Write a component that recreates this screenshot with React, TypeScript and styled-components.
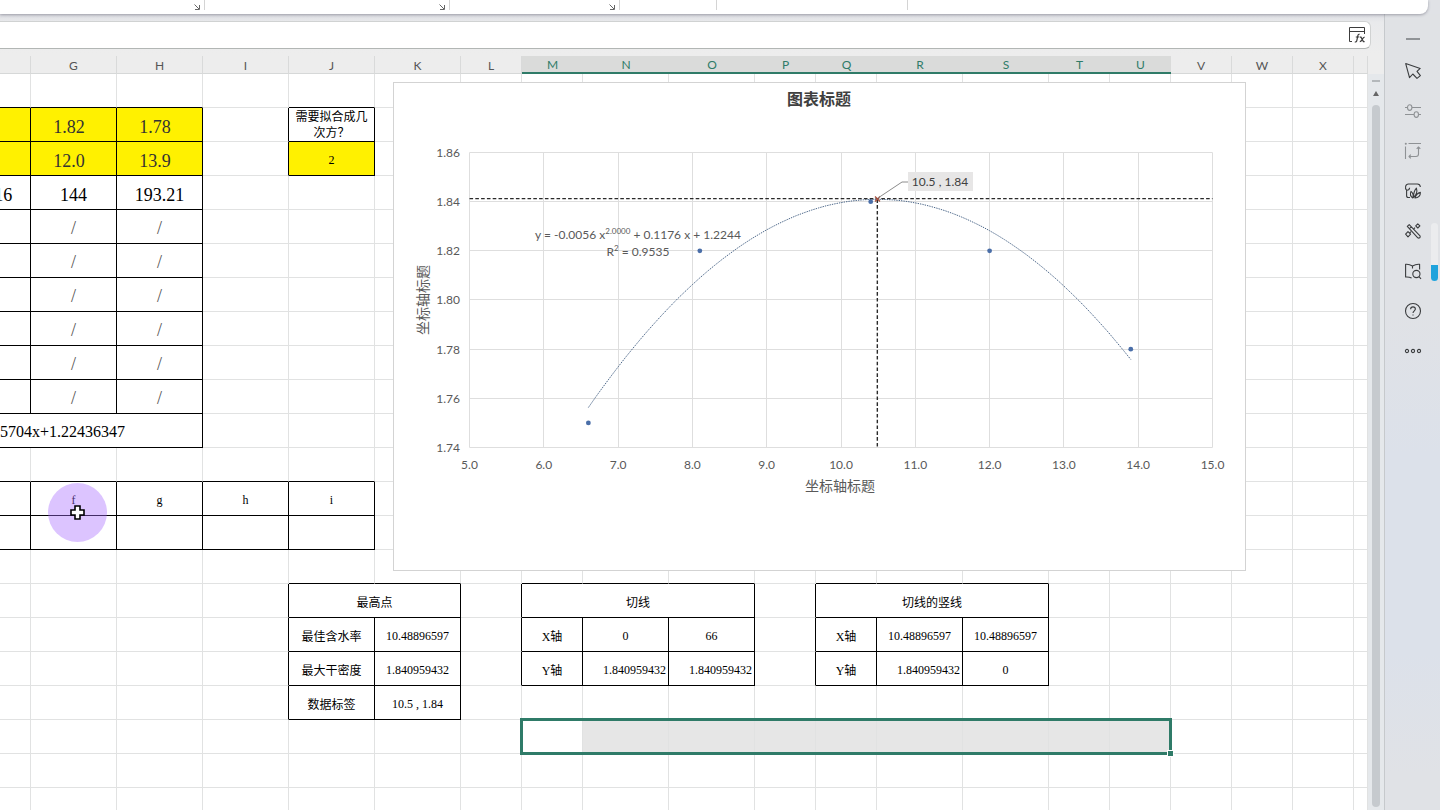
import React from "react";
import styled, { createGlobalStyle } from "styled-components";

const GlobalStyle = createGlobalStyle`
  *, *::before, *::after { box-sizing: border-box; }
  body { margin: 0; background: #e0e2e6; overflow: hidden; }
`;

const ui = `Lato, "Noto Sans CJK SC", sans-serif`;
const song = `"Liberation Serif", "Noto Sans CJK SC", serif`;
const green = "#2f7b68";

const Page = styled.div`
  display: flex;
  flex-direction: column;
  height: 100vh;
  font-family: ${ui};
`;

const Ribbon = styled.header`
  position: relative;
  z-index: 2;
  display: flex;
  flex: none;
  height: 14px;
  margin-right: 12px;
  background: #fff;
  border-bottom-right-radius: 8px;
  box-shadow: 0 1px 3px rgba(60, 60, 80, 0.4);
`;

const RibbonGroup = styled.div<{ $width: number }>`
  display: flex;
  justify-content: flex-end;
  width: ${(p) => p.$width}px;
  height: 10px;
  padding-right: 2px;
  border-right: 1px solid #d4d4d4;
`;

const Launcher = styled.button`
  display: flex;
  align-items: flex-end;
  width: 8px;
  height: 10px;
  padding: 0;
  border: 0;
  background: none;
  color: #666;
`;

const Body = styled.div`
  display: flex;
  flex: 1;
  min-height: 0;
`;

const Workbook = styled.main`
  display: flex;
  flex-direction: column;
  flex: 1;
  min-width: 0;
  background: linear-gradient(#dcdde2, #e9eaec 8px, #ededed 40px);
`;

const FormulaBar = styled.div`
  display: flex;
  flex: none;
  align-items: center;
  height: 28px;
  margin: 7px 13px 7px 0;
  padding-right: 5px;
  background: #fff;
  border: 1px solid #d0d2d2;
  border-bottom-color: #b2b6b4;
  border-left: 0;
  border-radius: 0 6px 6px 0;
`;

const FormulaInput = styled.input`
  flex: 1;
  height: 24px;
  border: 0;
  outline: 0;
  background: transparent;
  font: 13px ${ui};
`;

const IconButton = styled.button`
  display: flex;
  align-items: center;
  justify-content: center;
  padding: 0;
  border: 0;
  background: none;
  color: #3c3c3c;
`;

const SheetRow = styled.div`
  display: flex;
  flex: 1;
  min-height: 0;
`;

const Sheet = styled.section`
  position: relative;
  flex: 1;
  min-width: 0;
  overflow: hidden;
`;

const Grid = styled.table`
  width: calc(100% + 55px);
  margin-left: -55px;
  table-layout: fixed;
  border-collapse: separate;
  border-spacing: 0;
  background: #fff;
`;

const HeadCell = styled.th<{ $active?: boolean }>`
  height: 18px;
  padding: 1px 0 0;
  font: 400 12px/15px ${ui};
  color: ${(p) => (p.$active ? green : "#555")};
  background: ${(p) => (p.$active ? "#dadbda" : "#ededed")};
  border-right: ${(p) => (p.$active ? "0" : "1px solid #d9dada")};
  border-bottom: ${(p) => (p.$active ? `2px solid ${green}` : "1px solid #d6d8d8")};
`;

type Align = "center" | "left" | "right";
const line = (dark: boolean) => `1px solid ${dark ? "#000" : "#e1e2e2"}`;

const Cell = styled.td<{
  $right: boolean;
  $bottom: boolean;
  $fill?: string;
  $size?: number;
  $align?: Align;
  $pad?: string;
  $color?: string;
}>`
  height: 34px;
  padding: ${(p) => p.$pad ?? "0"};
  overflow: hidden;
  white-space: pre-line;
  vertical-align: middle;
  text-align: ${(p) => p.$align ?? "center"};
  font: ${(p) => p.$size ?? 12}px/16px ${song};
  color: ${(p) => p.$color ?? "#000"};
  background: ${(p) => p.$fill ?? "#fff"};
  border-right: ${(p) => line(p.$right)};
  border-bottom: ${(p) => line(p.$bottom)};
`;

const Selection = styled.div`
  position: absolute;
  left: 520px;
  top: 662px;
  width: 652px;
  height: 37px;
  border: 3px solid ${green};
`;

const FillHandle = styled.div`
  position: absolute;
  right: -5px;
  bottom: -5px;
  width: 7px;
  height: 7px;
  background: ${green};
  border: 1px solid #fff;
`;

const ChartFrame = styled.figure`
  position: absolute;
  left: 393px;
  top: 26px;
  margin: 0;
  background: #fff;
  border: 1px solid #d3d3d3;
  svg { display: block; }
  text { font-family: ${ui}; font-size: 12px; fill: #595959; }
  .heading { font-size: 16px; font-weight: 700; fill: #404040; }
  .axis { font-size: 14px; }
  .label { fill: #404040; }
  .power { font-size: 8px; }
`;

const Pointer = styled.div`
  position: absolute;
  left: 48px;
  top: 427px;
  display: flex;
  align-items: center;
  justify-content: center;
  width: 59px;
  height: 59px;
  border-radius: 50%;
  background: rgba(167, 107, 255, 0.4);
`;

const ScrollTrack = styled.div`
  display: flex;
  flex-direction: column;
  align-items: center;
  flex: none;
  width: 16px;
  margin-top: 18px;
  padding: 6px 0 3px;
  background: #e5e8eb;
`;

const SplitHandle = styled.div`
  width: 8px;
  height: 2px;
  background: #b4b8bb;
`;

const ScrollArrow = styled.button`
  display: flex;
  align-items: center;
  justify-content: center;
  width: 16px;
  height: 23px;
  padding: 0;
  border: 0;
  background: none;
  color: #666;
`;

const ScrollThumb = styled.div`
  flex: 1;
  width: 8px;
  border-radius: 4px;
  background: #c6cace;
`;

const Sidebar = styled.aside`
  position: relative;
  display: flex;
  flex: none;
  flex-direction: column;
  align-items: center;
  width: 56px;
  padding-top: 24px;
  border-left: 1px solid #c6c9cc;
  background: linear-gradient(#e0e2e5 0, #e0e2e6 300px, #dce1ea 440px, #dce1ea 640px, #e0e2e6 760px);
`;

const CollapseBar = styled.div`
  width: 14px;
  height: 2px;
  margin-bottom: 11px;
  background: #909396;
`;

const Tool = styled(IconButton)<{ $dim?: boolean }>`
  width: 40px;
  height: 40px;
  color: ${(p) => (p.$dim ? "#8f9295" : "#3a3c3e")};
`;

const SideGauge = styled.div`
  position: absolute;
  right: 2px;
  top: 209px;
  display: flex;
  align-items: flex-end;
  width: 7px;
  height: 58px;
  border-radius: 4px;
  background: #ebecee;
  overflow: hidden;
`;

const GaugeLevel = styled.div`
  width: 7px;
  height: 16px;
  background: #1fa3dc;
`;

/* ---- sheet data ---- */

const columns = [
  { name: "F", width: 86 },
  { name: "G", width: 86 },
  { name: "H", width: 86 },
  { name: "I", width: 86 },
  { name: "J", width: 86 },
  { name: "K", width: 86 },
  { name: "L", width: 61 },
  { name: "M", width: 61 },
  { name: "N", width: 86 },
  { name: "O", width: 86 },
  { name: "P", width: 61 },
  { name: "Q", width: 61 },
  { name: "R", width: 86 },
  { name: "S", width: 86 },
  { name: "T", width: 61 },
  { name: "U", width: 61 },
  { name: "V", width: 61 },
  { name: "W", width: 61 },
  { name: "X", width: 61 },
  { name: "", width: 0 },
];
const ROWS = 22;
const col = (name: string) => columns.findIndex((c) => c.name === name);

// Bordered ranges: first row, last row, first column, last column.
const boxes: [number, number, string, string][] = [
  [1, 10, "F", "H"],
  [1, 2, "J", "J"],
  [12, 13, "F", "J"],
  [15, 18, "J", "K"],
  [15, 17, "M", "O"],
  [15, 17, "Q", "S"],
];
const boxed = (r: number, c: number) =>
  boxes.some(([r0, r1, a, b]) => r >= r0 && r <= r1 && c >= col(a) && c <= col(b));

type Spec = {
  text?: string;
  span?: number;
  fill?: string;
  size?: number;
  align?: Align;
  pad?: string;
  color?: string;
};
const yellow = "#fff100";
const cells: Record<string, Spec> = {
  F1: { fill: yellow },
  G1: { text: "1.82", fill: yellow, size: 18, pad: "4px 9px 0 0", color: "#333" },
  H1: { text: "1.78", fill: yellow, size: 18, pad: "4px 9px 0 0", color: "#333" },
  J1: { text: "需要拟合成几\n次方？", pad: "1px 0 0" },
  F2: { fill: yellow },
  G2: { text: "12.0", fill: yellow, size: 18, pad: "4px 9px 0 0", color: "#333" },
  H2: { text: "13.9", fill: yellow, size: 18, pad: "4px 9px 0 0", color: "#333" },
  J2: { text: "2", fill: yellow, pad: "2px 0 0" },
  F3: { text: "108.16", size: 18, pad: "4px 0 0" },
  G3: { text: "144", size: 18, pad: "4px 0 0" },
  H3: { text: "193.21", size: 18, pad: "4px 0 0" },
  F10: { text: "5704x+1.22436347", span: 3, size: 16, align: "left", pad: "3px 0 0 55px" },
  G12: { text: "f", pad: "3px 0 0" },
  H12: { text: "g", pad: "3px 0 0" },
  I12: { text: "h", pad: "3px 0 0" },
  J12: { text: "i", pad: "3px 0 0" },
  J15: { text: "最高点", span: 2, pad: "4px 0 0" },
  J16: { text: "最佳含水率", pad: "4px 0 0" },
  K16: { text: "10.48896597", pad: "3px 0 0" },
  J17: { text: "最大干密度", pad: "4px 0 0" },
  K17: { text: "1.840959432", pad: "3px 0 0" },
  J18: { text: "数据标签", pad: "4px 0 0" },
  K18: { text: "10.5 , 1.84", pad: "3px 0 0" },
  M15: { text: "切线", span: 3, pad: "4px 0 0" },
  M16: { text: "X轴", pad: "4px 0 0" },
  N16: { text: "0", pad: "3px 0 0" },
  O16: { text: "66", pad: "3px 0 0" },
  M17: { text: "Y轴", pad: "4px 0 0" },
  N17: { text: "1.840959432", align: "right", pad: "3px 2px 0 0" },
  O17: { text: "1.840959432", align: "right", pad: "3px 2px 0 0" },
  Q15: { text: "切线的竖线", span: 3, pad: "4px 0 0" },
  Q16: { text: "X轴", pad: "4px 0 0" },
  R16: { text: "10.48896597", pad: "3px 0 0" },
  S16: { text: "10.48896597", pad: "3px 0 0" },
  Q17: { text: "Y轴", pad: "4px 0 0" },
  R17: { text: "1.840959432", align: "right", pad: "3px 2px 0 0" },
  S17: { text: "0", pad: "3px 0 0" },
};
for (let r = 4; r <= 9; r++) {
  for (const c of ["G", "H"]) cells[c + r] = { text: "/", size: 18, pad: "2px 0 0", color: "#555" };
}
for (const c of "NOPQRSTU") cells[c + 19] = { fill: "#e6e6e6" };

function SheetRows() {
  return (
    <>
      {Array.from({ length: ROWS }, (_, r) => {
        const out: React.ReactNode[] = [];
        for (let c = 0; c < columns.length; c++) {
          const spec = cells[columns[c].name + r] ?? {};
          const last = c + (spec.span ?? 1) - 1;
          out.push(
            <Cell
              key={c}
              colSpan={spec.span}
              $right={boxed(r, last) || boxed(r, last + 1)}
              $bottom={boxed(r, c) || boxed(r + 1, c)}
              $fill={spec.fill}
              $size={spec.size}
              $align={spec.align}
              $pad={spec.pad}
              $color={spec.color}
            >
              {spec.text}
            </Cell>
          );
          c = last;
        }
        return <tr key={r}>{out}</tr>;
      })}
    </>
  );
}

/* ---- chart ---- */

const plot = { left: 75.5, right: 818.5, top: 69.5, bottom: 364.5 };
const px = (x: number) => plot.left + ((x - 5) / 10) * (plot.right - plot.left);
const py = (y: number) => plot.bottom - ((y - 1.74) / 0.12) * (plot.bottom - plot.top);
const peak = { x: 10.48896597, y: 1.840959432 };
const points = [[6.6, 1.75], [8.1, 1.82], [10.4, 1.84], [12, 1.82], [13.9, 1.78]];
const trend = Array.from({ length: 74 }, (_, i) => {
  const x = 6.6 + i * 0.1;
  return `${px(x).toFixed(1)},${py(peak.y - 0.0056 * (x - peak.x) ** 2).toFixed(1)}`;
}).join(" ");

function Chart() {
  const xs = Array.from({ length: 11 }, (_, i) => 5 + i);
  const ys = Array.from({ length: 7 }, (_, i) => 1.74 + i * 0.02);
  return (
    <ChartFrame>
      <svg width="851" height="487" role="img" aria-label="图表标题">
        <g stroke="#dedede">
          {xs.map((x) => (
            <line key={x} x1={Math.floor(px(x)) + 0.5} x2={Math.floor(px(x)) + 0.5} y1={plot.top} y2={plot.bottom} />
          ))}
          {ys.map((y) => (
            <line key={y} x1={plot.left} x2={plot.right} y1={Math.floor(py(y)) + 0.5} y2={Math.floor(py(y)) + 0.5} />
          ))}
        </g>
        <text className="heading" x="425" y="22" textAnchor="middle">图表标题</text>
        {ys.map((y) => (
          <text key={y} x="66" y={Math.floor(py(y)) + 5} textAnchor="end">{y.toFixed(2)}</text>
        ))}
        {xs.map((x) => (
          <text key={x} x={px(x)} y="386" textAnchor="middle">{x.toFixed(1)}</text>
        ))}
        <text className="axis" x="446" y="408" textAnchor="middle">坐标轴标题</text>
        <text className="axis" transform="translate(34 217) rotate(-90)" textAnchor="middle">坐标轴标题</text>
        <polyline points={trend} fill="none" stroke="#4d688a" strokeDasharray="1.4 1" />
        {points.map(([x, y]) => (
          <circle key={x} cx={px(x)} cy={py(y)} r="2.4" fill="#4a6ea8" />
        ))}
        <g stroke="#2a2a2a" strokeWidth="1.4" strokeDasharray="3.6 2.2">
          <line x1={plot.left} x2={plot.right} y1="115.6" y2="115.6" />
          <line x1={px(peak.x)} x2={px(peak.x)} y1={py(peak.y)} y2={plot.bottom} />
        </g>
        <path d="M481 113.5l5 5M486 113.5l-5 5" stroke="#a8503e" strokeWidth="1.3" />
        <path d="M484 115L508 99H514" fill="none" stroke="#8c8c8c" />
        <rect x="514" y="89" width="65" height="19" fill="#e7e6e6" />
        <text className="label" x="546" y="103" textAnchor="middle">10.5 , 1.84</text>
        <text x="244" y="156" textAnchor="middle">
          y = -0.0056 x<tspan className="power" dy="-5">2.0000</tspan>
          <tspan dy="5"> + 0.1176 x + 1.2244</tspan>
        </text>
        <text x="244" y="173" textAnchor="middle">
          R<tspan className="power" dy="-5">2</tspan>
          <tspan dy="5"> = 0.9535</tspan>
        </text>
      </svg>
    </ChartFrame>
  );
}

/* ---- icons ---- */

function Glyph({ children, size = 16 }: { children: React.ReactNode; size?: number }) {
  return (
    <svg
      width={size}
      height={size}
      viewBox="0 0 16 16"
      fill="none"
      stroke="currentColor"
      strokeWidth="1.1"
      strokeLinejoin="round"
      overflow="visible"
      aria-hidden="true"
    >
      {children}
    </svg>
  );
}

const LauncherIcon = () => (
  <svg width="6" height="6" viewBox="0 0 6 6" fill="none" stroke="currentColor" aria-hidden="true">
    <path d="M.5 .5L5 5M5.5 1V5.5H1" />
  </svg>
);

const tools: { label: string; dim?: boolean; icon: React.ReactNode }[] = [
  { label: "选择", icon: <path d="M.7 .6L4.5 14.6L7.8 11L12 15.4L15.4 12.6L12 8.4L15.2 5.4Z" /> },
  {
    label: "属性",
    dim: true,
    icon: (
      <>
        <ellipse cx="4.7" cy="4.6" rx="2.2" ry="2.8" />
        <ellipse cx="11.3" cy="11.6" rx="2.2" ry="2.8" />
        <path d="M0 4.5H2.5M7 4.5H16M0 11.5H9M13.5 11.5H16" />
      </>
    ),
  },
  {
    label: "转换",
    dim: true,
    icon: (
      <>
        <path d="M3.5 .5H16M.5 3.5V16M13.5 4V11Q13.5 13.5 11 13.5H4M11.7 5.8L13.5 4L15.3 5.8M5.8 11.7L4 13.5L5.8 15.3" />
        <circle cx=".8" cy=".8" r=".5" />
      </>
    ),
  },
  {
    label: "素材",
    icon: (
      <path d="M5 14.5H3.2Q1.6 14.5 1.6 12.8V7.2C-.4 5.4 .4 1 3.4 1H12.4Q15 1 15.4 4M1.6 7.2Q4.4 7.4 4.6 4.8M7.8 15C5.6 13.6 5 10.8 6 8.4C8 10 8.6 12.6 7.8 15ZM8.6 14.4C8.4 10.8 9.4 7.4 11.4 5.2C12.4 8.4 11.4 12 8.6 14.4ZM10 15C10.8 12 12.6 10 15.4 9.4C15.6 12.6 13.4 14.8 10 15Z" />
    ),
  },
  {
    label: "美化",
    icon: (
      <>
        <path d="M2.3 3.4L4.2 1.6L15 12.8Q15.6 14 14.7 14.8Q13.7 15.4 12.8 14.8ZM6.4 3.9L4.5 5.7" />
        <path d="M12.8 .8L14.9 2.9L12.8 5L10.7 2.9ZM3 8.6L5.6 11.2L3 13.8L.6 11.2ZM10 4.6L8.6 6M6 8.6L4.8 9.8" />
      </>
    ),
  },
  {
    label: "查找",
    icon: (
      <>
        <path d="M7.5 3Q4 .9 .6 1.3V14Q4 13.7 6.6 15M7.5 3Q11 .9 14.6 1.3V6.4M7.5 3V5.6" />
        <circle cx="11.4" cy="11" r="3.6" />
        <path d="M14 13.6L16 15.8" />
      </>
    ),
  },
  {
    label: "帮助",
    icon: (
      <>
        <circle cx="8" cy="8" r="7.5" />
        <path d="M5.6 6.2Q5.7 3.9 8 3.9T10.4 6.1C10.4 7.8 8 7.9 8 10M8 11.4V12.6" />
      </>
    ),
  },
  {
    label: "更多",
    icon: (
      <>
        <circle cx="2" cy="8" r="1.6" />
        <circle cx="8" cy="8" r="1.6" />
        <circle cx="14" cy="8" r="1.6" />
      </>
    ),
  },
];

const ribbonGroups = [
  { width: 205, launcher: true },
  { width: 245, launcher: true },
  { width: 170, launcher: true },
  { width: 97, launcher: false },
  { width: 191, launcher: false },
];

export default function App() {
  return (
    <Page>
      <GlobalStyle />
      <Ribbon>
        {ribbonGroups.map((g, i) => (
          <RibbonGroup key={i} $width={g.width}>
            {g.launcher && (
              <Launcher aria-label="更多选项">
                <LauncherIcon />
              </Launcher>
            )}
          </RibbonGroup>
        ))}
      </Ribbon>
      <Body>
        <Workbook>
          <FormulaBar>
            <FormulaInput aria-label="编辑栏" />
            <IconButton aria-label="插入函数">
              <svg width="16" height="16" viewBox="0 0 16 16" fill="none" stroke="currentColor" aria-hidden="true">
                <path d="M3 14.5H.5V.5H15.5V7M.5 4.5H15.5" />
                <path d="M10.6 7.4Q9.2 6.8 8.8 8.8L7.8 13.6Q7.4 15.4 5.8 14.9M6.8 10H10.4M11 10.2H12L14.4 14.6H15.6M15.6 10.2Q14.4 10.2 13.2 12.4T10.8 14.6" strokeWidth="1.2" />
              </svg>
            </IconButton>
          </FormulaBar>
          <SheetRow>
            <Sheet>
              <Grid>
                <colgroup>
                  {columns.map((c) => (
                    <col key={c.name} style={c.width ? { width: c.width } : undefined} />
                  ))}
                </colgroup>
                <thead>
                  <tr>
                    {columns.map((c, i) => (
                      <HeadCell key={c.name} scope="col" $active={c.name >= "M" && c.name <= "U"}>
                        {i > 0 && c.name}
                      </HeadCell>
                    ))}
                  </tr>
                </thead>
                <tbody>
                  <SheetRows />
                </tbody>
              </Grid>
              <Chart />
              <Selection>
                <FillHandle />
              </Selection>
              <Pointer>
                <svg width="15" height="15" viewBox="0 0 15 15" aria-hidden="true">
                  <path d="M5 1H10V5H14V10H10V14H5V10H1V5H5Z" fill="#fff" stroke="#000" strokeWidth="1.6" />
                </svg>
              </Pointer>
            </Sheet>
            <ScrollTrack>
              <SplitHandle />
              <ScrollArrow aria-label="向上滚动">
                <svg width="6" height="5" viewBox="0 0 6 5" aria-hidden="true">
                  <path d="M3 0L6 5H0Z" fill="currentColor" />
                </svg>
              </ScrollArrow>
              <ScrollThumb />
            </ScrollTrack>
          </SheetRow>
        </Workbook>
        <Sidebar>
          <CollapseBar />
          {tools.map((t) => (
            <Tool key={t.label} aria-label={t.label} $dim={t.dim}>
              <Glyph>{t.icon}</Glyph>
            </Tool>
          ))}
          <SideGauge>
            <GaugeLevel />
          </SideGauge>
        </Sidebar>
      </Body>
    </Page>
  );
}
